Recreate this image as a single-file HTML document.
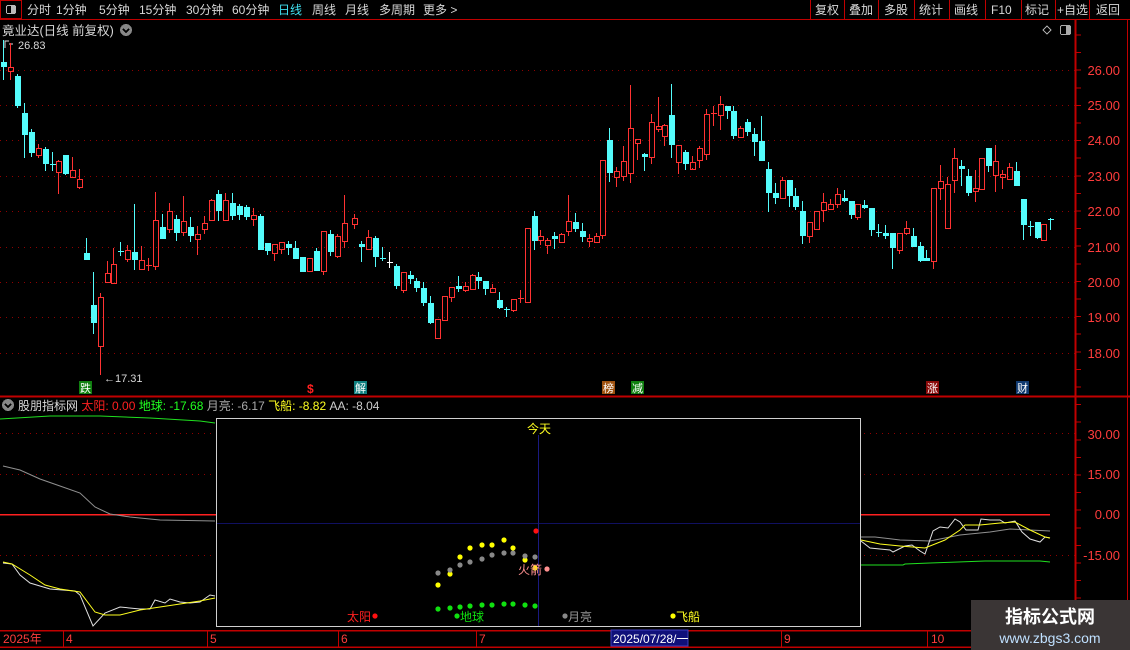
<!DOCTYPE html>
<html><head><meta charset="utf-8">
<style>
html,body{margin:0;padding:0;background:#000;width:1130px;height:650px;overflow:hidden}
svg{display:block;font-family:"Liberation Sans","Noto Sans CJK SC",sans-serif}
</style></head>
<body>
<svg id="s" width="1130" height="650" viewBox="0 0 1130 650" xmlns="http://www.w3.org/2000/svg" shape-rendering="crispEdges">
<rect width="1130" height="650" fill="#000"/>
<!-- top bar -->
<rect x="0.5" y="0.5" width="21" height="18" fill="none" stroke="#c00000"/>
<rect x="6.5" y="5.5" width="9" height="8" rx="1.5" fill="none" stroke="#bbb"/>
<rect x="11" y="6" width="4" height="7" fill="#bbb"/>
<line x1="0" y1="19.5" x2="1130" y2="19.5" stroke="#c00000"/>
<g font-size="12" fill="#d8d8d8">
<text x="27" y="14">分时</text><text x="56" y="14">1分钟</text><text x="99" y="14">5分钟</text>
<text x="139" y="14">15分钟</text><text x="186" y="14">30分钟</text><text x="232" y="14">60分钟</text>
<text x="278" y="14" fill="#40e0f0">日线</text><text x="312" y="14">周线</text><text x="345" y="14">月线</text>
<text x="379" y="14">多周期</text><text x="423" y="14">更多 &gt;</text>
<text x="815" y="14">复权</text><text x="849" y="14">叠加</text><text x="884" y="14">多股</text>
<text x="919" y="14">统计</text><text x="954" y="14">画线</text><text x="991" y="14">F10</text>
<text x="1025" y="14">标记</text><text x="1057" y="14">+自选</text><text x="1096" y="14">返回</text>
</g>
<g stroke="#c00000">
<line x1="810.5" y1="0" x2="810.5" y2="19"/><line x1="844.5" y1="0" x2="844.5" y2="19"/>
<line x1="878.5" y1="0" x2="878.5" y2="19"/><line x1="914.5" y1="0" x2="914.5" y2="19"/>
<line x1="949.5" y1="0" x2="949.5" y2="19"/><line x1="985.5" y1="0" x2="985.5" y2="19"/>
<line x1="1021.5" y1="0" x2="1021.5" y2="19"/><line x1="1055.5" y1="0" x2="1055.5" y2="19"/>
<line x1="1089.5" y1="0" x2="1089.5" y2="19"/>
</g>
<!-- header -->
<text x="2" y="35" font-size="12.5" fill="#d8d8d8">竟业达(日线 前复权)</text>
<circle cx="126" cy="30" r="6" fill="#888"/>
<path d="M123 29 L126 32 L129 29" stroke="#000" stroke-width="1.5" fill="none"/>
<path d="M1047 26 L1051 30 L1047 34 L1043 30 Z" fill="none" stroke="#aaa"/>
<rect x="1060.5" y="25.5" width="10" height="9" rx="1.5" fill="none" stroke="#aaa"/>
<rect x="1066" y="26" width="4" height="8" fill="#aaa"/>
<path d="M5 48 L5 41 L9 41 M9 44 L13 44" stroke="#ddd" fill="none"/>
<text x="18" y="49" font-size="11" fill="#d8d8d8">26.83</text>
<text x="104" y="382" font-size="11" fill="#d8d8d8">←17.31</text>
<!-- grid -->
<g stroke="#900000" stroke-dasharray="1,5">
<line x1="0" y1="70.5" x2="1075" y2="70.5"/><line x1="0" y1="105.5" x2="1075" y2="105.5"/>
<line x1="0" y1="140.5" x2="1075" y2="140.5"/><line x1="0" y1="176.5" x2="1075" y2="176.5"/>
<line x1="0" y1="211.5" x2="1075" y2="211.5"/><line x1="0" y1="247.5" x2="1075" y2="247.5"/>
<line x1="0" y1="282.5" x2="1075" y2="282.5"/><line x1="0" y1="317.5" x2="1075" y2="317.5"/>
<line x1="0" y1="353.5" x2="1075" y2="353.5"/>
<line x1="0" y1="433.5" x2="1075" y2="433.5"/><line x1="0" y1="474.5" x2="1075" y2="474.5"/>
<line x1="0" y1="555.5" x2="1075" y2="555.5"/>
</g>
<g id="candles"></g>
<!-- right axis -->
<line x1="1075.5" y1="20" x2="1075.5" y2="630" stroke="#c00000" stroke-width="2"/>
<line x1="1127.5" y1="20" x2="1127.5" y2="630" stroke="#c00000"/>
<g font-size="13" fill="#ff3c3c" text-anchor="end">
<text x="1120" y="75">26.00</text><text x="1120" y="110">25.00</text><text x="1120" y="145">24.00</text>
<text x="1120" y="181">23.00</text><text x="1120" y="216">22.00</text><text x="1120" y="252">21.00</text>
<text x="1120" y="287">20.00</text><text x="1120" y="322">19.00</text><text x="1120" y="358">18.00</text>
<text x="1120" y="439">30.00</text><text x="1120" y="479">15.00</text><text x="1120" y="519">0.00</text>
<text x="1120" y="560">-15.00</text>
</g>
<g stroke="#c00000" id="ticks"></g>
<!-- labels row -->
<rect x="79" y="381" width="13" height="13" fill="#108010"/><text x="80" y="392" font-size="11" fill="#fff">跌</text>
<text x="307" y="393" font-size="12" fill="#ff2020" font-weight="bold">$</text>
<rect x="354" y="381" width="13" height="13" fill="#108080"/><text x="355" y="392" font-size="11" fill="#fff">解</text>
<rect x="602" y="381" width="13" height="13" fill="#a0520f"/><text x="603" y="392" font-size="11" fill="#fff">榜</text>
<rect x="631" y="381" width="13" height="13" fill="#108010"/><text x="632" y="392" font-size="11" fill="#fff">减</text>
<rect x="926" y="381" width="13" height="13" fill="#8a0a0a"/><text x="927" y="392" font-size="11" fill="#fff">涨</text>
<rect x="1016" y="381" width="13" height="13" fill="#103a70"/><text x="1017" y="392" font-size="11" fill="#fff">财</text>
<line x1="0" y1="396.5" x2="1130" y2="396.5" stroke="#c00000" stroke-width="2"/>
<!-- indicator header -->
<circle cx="8" cy="405" r="6" fill="#888"/>
<path d="M5 404 L8 407 L11 404" stroke="#000" stroke-width="1.5" fill="none"/>
<text x="18" y="410" font-size="12"><tspan fill="#d8d8d8">股朋指标网 </tspan><tspan fill="#ff2020">太阳: 0.00 </tspan><tspan fill="#20ff20">地球: -17.68 </tspan><tspan fill="#aaa">月亮: -6.17 </tspan><tspan fill="#ffff20">飞船: -8.82 </tspan><tspan fill="#ccc">AA: -8.04</tspan></text>
<line x1="0" y1="514.5" x2="1050" y2="514.5" stroke="#ff2020" stroke-width="1.5"/>
<g fill="none" stroke-width="1" shape-rendering="auto">
<polyline stroke="#20e020" points="0,419 50,416 100,416 150,418 200,421 215,423"/>
<polyline stroke="#909090" points="3,466 20,470 40,479 60,486 80,493 95,507 110,514 130,517 160,520 215,521"/>
<polyline stroke="#e0e0e0" points="3,563 12,564 20,575 30,583 50,589 75,591 80,595 93,626 105,613 120,607 140,609 150,609 155,600 165,603 170,599 180,602 190,603 200,602 210,595 215,596"/>
<polyline stroke="#ffff20" points="3,562 12,564 30,575 45,585 60,589 80,592 95,612 105,615 120,615 140,610 160,607 180,604 200,601 215,598"/>
<polyline stroke="#20e020" points="861,565 903,565 905,564 930,563 958,562 985,561 1040,561 1050,562"/>
<polyline stroke="#909090" points="861,537 875,537 900,540 930,541 960,535 990,532 1010,529 1030,530 1050,531"/>
<polyline stroke="#e0e0e0" points="861,541 870,548 890,550 893,552 905,546 912,545 920,551 925,554 933,531 940,527 948,528 955,519 960,522 966,530 978,530 981,519 990,520 1000,520 1005,523 1015,521 1022,532 1030,539 1040,542 1045,537 1050,538"/>
<polyline stroke="#ffff20" points="861,540 880,544 900,546 925,548 945,540 960,530 965,525 980,525 1000,523 1015,522 1030,530 1045,537 1050,538"/>
</g>
<!-- popup -->
<rect x="216.5" y="418.5" width="644" height="208" fill="#000" stroke="#d0d0d0"/>
<line x1="217" y1="523.5" x2="860" y2="523.5" stroke="#101060"/>
<line x1="538.5" y1="435" x2="538.5" y2="626" stroke="#1a1a80"/>
<text x="527" y="433" font-size="12" fill="#ffff20">今天</text>
<g shape-rendering="auto">
<g fill="#ffff00"><circle cx="438" cy="585" r="2.6"/><circle cx="450" cy="574" r="2.6"/><circle cx="460" cy="557" r="2.6"/><circle cx="470" cy="548" r="2.6"/><circle cx="482" cy="545" r="2.6"/><circle cx="492" cy="545" r="2.6"/><circle cx="504" cy="540" r="2.6"/><circle cx="513" cy="548" r="2.6"/><circle cx="525" cy="560" r="2.6"/><circle cx="535" cy="568" r="2.6"/><circle cx="673" cy="616" r="2.6"/></g>
<g fill="#888"><circle cx="438" cy="573" r="2.6"/><circle cx="450" cy="570" r="2.6"/><circle cx="460" cy="565" r="2.6"/><circle cx="470" cy="562" r="2.6"/><circle cx="482" cy="559" r="2.6"/><circle cx="492" cy="555" r="2.6"/><circle cx="504" cy="553" r="2.6"/><circle cx="513" cy="553" r="2.6"/><circle cx="525" cy="556" r="2.6"/><circle cx="535" cy="557" r="2.6"/><circle cx="565" cy="616" r="2.6"/></g>
<g fill="#10e010"><circle cx="438" cy="609" r="2.6"/><circle cx="450" cy="608" r="2.6"/><circle cx="460" cy="607" r="2.6"/><circle cx="470" cy="606" r="2.6"/><circle cx="482" cy="605" r="2.6"/><circle cx="492" cy="605" r="2.6"/><circle cx="504" cy="604" r="2.6"/><circle cx="513" cy="604" r="2.6"/><circle cx="525" cy="605" r="2.6"/><circle cx="535" cy="606" r="2.6"/><circle cx="457" cy="616" r="2.6"/></g>
<circle cx="536" cy="531" r="2.6" fill="#ff1010"/><circle cx="375" cy="616" r="2.6" fill="#ff1010"/>
<circle cx="547" cy="569" r="2.6" fill="#ff9090"/>
</g>
<text x="518" y="574" font-size="12" fill="#ff9090">火箭</text>
<text x="347" y="621" font-size="12" fill="#ff2020">太阳</text>
<text x="460" y="621" font-size="12" fill="#10e010">地球</text>
<text x="568" y="621" font-size="12" fill="#999">月亮</text>
<text x="676" y="621" font-size="12" fill="#ffff20">飞船</text>
<!-- time axis -->
<line x1="0" y1="630.5" x2="1130" y2="630.5" stroke="#c00000" stroke-width="1.5"/>
<line x1="0" y1="647" x2="1130" y2="647" stroke="#c00000" stroke-width="1.5"/>
<g stroke="#c00000">
<line x1="63.5" y1="630" x2="63.5" y2="647"/><line x1="207.5" y1="630" x2="207.5" y2="647"/>
<line x1="338.5" y1="630" x2="338.5" y2="647"/><line x1="476.5" y1="630" x2="476.5" y2="647"/>
<line x1="781.5" y1="630" x2="781.5" y2="647"/><line x1="927.5" y1="630" x2="927.5" y2="647"/>
</g>
<g font-size="12" fill="#ff3c3c">
<text x="3" y="643">2025年</text><text x="66" y="643">4</text><text x="210" y="643">5</text>
<text x="341" y="643">6</text><text x="479" y="643">7</text><text x="784" y="643">9</text><text x="931" y="643">10</text>
</g>
<rect x="611" y="630" width="77" height="16" fill="#10107a" stroke="#4040c0"/>
<text x="613" y="643" font-size="12" fill="#fff">2025/07/28/一</text>
<!-- watermark -->
<rect x="971" y="600" width="159" height="50" fill="#3a3535"/>
<text x="1050" y="623" font-size="18" font-weight="bold" fill="#fff" text-anchor="middle">指标公式网</text>
<text x="1050" y="643" font-size="14" fill="#bfe0ff" text-anchor="middle">www.zbgs3.com</text>
</svg>
<script>
var D=[[3,62,67,40,80],[10,71,67,43,80],[17,76,106,74,108],[24,113,135,103,158],[31,132,153,129,157],[38,155,148,144,158],[45,149,164,147,171],[52,164,164,152,171,'c'],[58,172,161,160,194],[65,155,174,155,175],[72,177,170,157,178],[79,187,179,169,189],[86,253,260,238,260],[93,305,323,272,334],[100,346,297,293,375],[107,282,273,261,283],[113,283,264,248,283],[120,251,251,242,256,'c'],[127,259,250,245,262],[134,252,260,204,270],[141,269,260,246,269],[148,265,265,258,271,'r'],[155,266,220,192,270],[162,227,239,214,239],[169,229,211,203,233],[176,219,233,215,241],[183,232,221,196,236],[190,227,236,217,242],[197,239,234,226,255],[204,229,223,216,234],[211,220,200,199,220],[218,194,211,190,221],[225,220,200,193,220],[232,203,216,193,220],[239,206,215,204,220],[246,207,217,205,220],[253,219,215,208,226],[260,216,250,214,250],[267,243,251,243,255],[274,253,244,244,261],[281,249,242,242,254],[288,244,248,241,255],[295,248,259,241,259],[302,257,272,257,272],[309,271,258,258,272],[316,251,271,248,271],[323,271,231,231,275],[330,234,252,230,256],[337,256,236,234,258],[344,241,223,195,248],[354,224,218,214,229],[361,244,247,241,262],[368,249,237,230,249],[375,238,257,236,267],[382,258,258,247,261,'c'],[389,262,262,252,268,'w'],[396,266,286,264,289],[403,290,272,272,293],[410,275,279,271,284],[416,281,288,278,292],[423,288,303,282,306],[430,303,323,296,324],[437,338,319,319,339],[444,320,296,296,320],[451,297,287,287,302],[458,286,289,276,292],[465,290,286,282,292],[472,289,275,274,290],[478,277,281,272,289],[485,281,289,281,295],[492,292,288,284,293],[499,300,308,292,309],[506,309,309,307,317,'c'],[513,310,299,299,312],[520,298,298,290,303,'r'],[527,302,228,228,302],[534,216,241,211,250],[540,240,236,230,245],[547,245,240,238,254],[554,236,239,232,249],[561,242,234,233,243],[568,231,221,195,236],[575,222,229,213,232],[582,231,237,223,242],[589,241,238,234,247],[596,242,236,233,243],[602,235,160,160,239],[609,140,173,128,182],[616,177,171,167,187],[623,176,161,146,181],[630,173,128,85,183],[637,143,139,139,160],[644,154,157,153,171],[651,157,122,114,164],[658,129,126,97,132],[664,136,125,124,146],[671,115,145,84,158],[678,162,145,145,174],[685,152,164,150,170],[692,169,162,156,168],[699,160,148,146,168],[706,154,114,109,160],[713,113,113,106,126,'r'],[720,115,104,96,130],[727,106,111,106,119],[733,111,136,106,139],[740,137,128,126,137],[747,122,132,119,136],[754,134,142,128,156],[761,141,161,116,161],[768,169,193,162,212],[775,193,198,183,204],[782,198,180,177,198],[789,180,196,180,207],[795,196,207,188,210],[802,211,236,201,244],[809,236,222,222,243],[816,229,211,211,229],[823,210,202,193,222],[830,209,204,199,209],[837,204,194,188,208],[844,198,201,190,202],[851,201,215,201,219],[857,217,204,204,220],[864,205,208,200,209],[871,208,230,208,236],[878,232,232,224,237,'c'],[885,233,236,225,239],[892,233,248,233,269],[899,250,233,233,254],[906,233,228,221,235],[913,236,247,228,247],[920,246,261,242,262],[926,258,261,250,261],[933,261,188,188,269],[940,188,181,165,200],[947,228,184,177,228],[954,180,158,148,193],[961,166,169,160,186],[968,176,193,169,196],[975,191,188,170,202],[981,189,158,158,189],[988,148,166,148,172],[995,175,161,145,192],[1002,177,174,170,189],[1009,179,167,163,179],[1016,171,186,162,186],[1023,199,225,199,240],[1030,226,226,221,236,'c'],[1037,222,238,222,239],[1043,240,224,224,240],[1050,219,219,218,230,'c']];
var h='';
D.forEach(function(d){
 var x=d[0],o=d[1],c=d[2],hi=d[3],lo=d[4],f=d[5];
 var col=f?(f=='c'?'#54fcfc':f=='w'?'#ffffff':'#ff3232'):(c<o?'#ff3232':'#54fcfc');
 var up=f?(f=='r'):(c<o);
 var t=Math.min(o,c),b=Math.max(o,c);
 var cx=x+0.5;
 if(up&&b-t>1){
  h+='<line x1="'+cx+'" y1="'+hi+'" x2="'+cx+'" y2="'+t+'" stroke="'+col+'"/>';
  h+='<line x1="'+cx+'" y1="'+b+'" x2="'+cx+'" y2="'+lo+'" stroke="'+col+'"/>';
  h+='<rect x="'+(x-1.5)+'" y="'+(t+0.5)+'" width="5" height="'+(b-t)+'" fill="none" stroke="'+col+'"/>';
 }else{
  h+='<line x1="'+cx+'" y1="'+hi+'" x2="'+cx+'" y2="'+lo+'" stroke="'+col+'"/>';
  var hh=Math.max(b-t,1);
  h+='<rect x="'+(x-2)+'" y="'+t+'" width="6" height="'+hh+'" fill="'+col+'"/>';
 }
});
document.getElementById('candles').innerHTML=h;
var t='';
for(var y=35;y<630;y+=17.6){t+='<line x1="1075" y1="'+y.toFixed(1)+'" x2="1081" y2="'+y.toFixed(1)+'"/>';}
document.getElementById('ticks').innerHTML=t;
</script>
</body></html>
